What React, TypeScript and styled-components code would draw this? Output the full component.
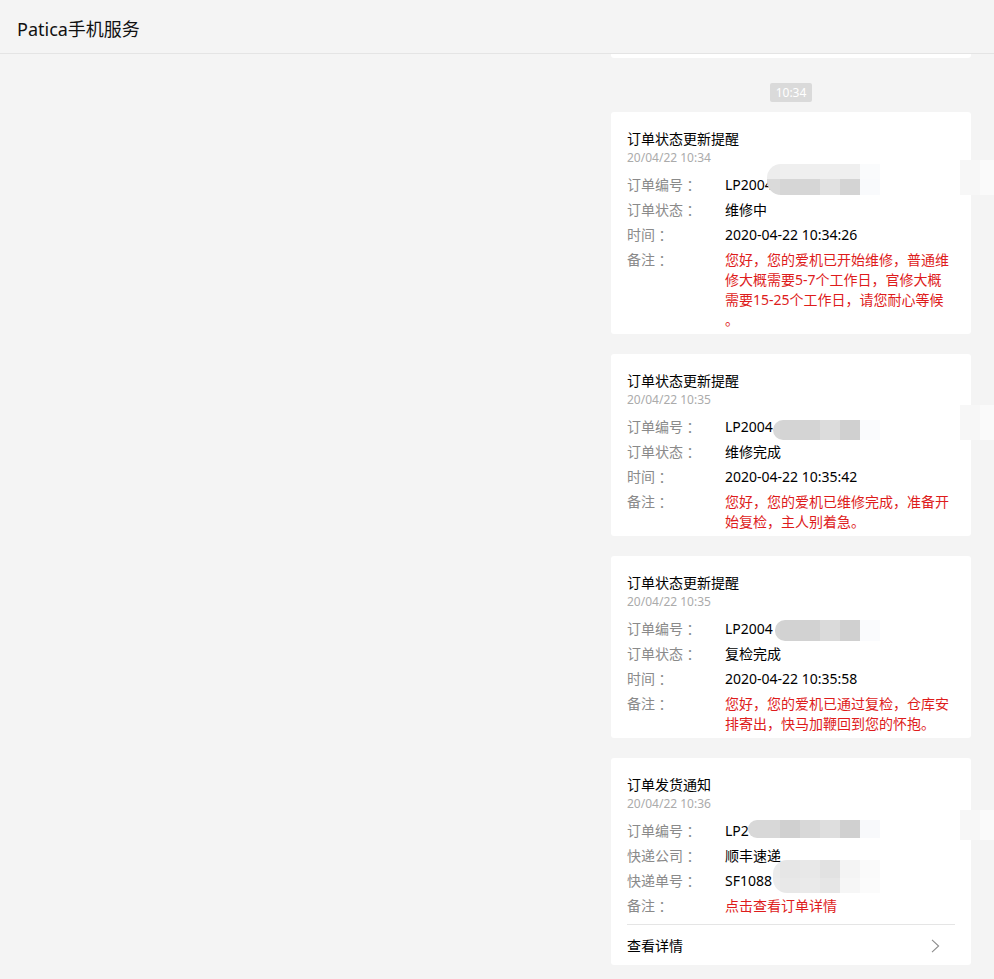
import React from "react";
import styled, { createGlobalStyle } from "styled-components";

const GlobalStyle = createGlobalStyle`
  html, body {
    margin: 0;
    padding: 0;
    background: #f4f4f4;
  }
  body {
    font-family: "Noto Sans", "Noto Sans CJK SC", sans-serif;
    color: #000;
  }
  * { box-sizing: border-box; }
`;

const Page = styled.div`
  min-height: 100vh;
  display: flex;
  flex-direction: column;
  overflow: hidden;
`;

const Header = styled.header`
  height: 54px;
  display: flex;
  align-items: center;
  padding: 3px 0 0 17px;
  border-bottom: 1px solid #e4e4e4;
  font-size: 18px;
  color: #111;
  flex-shrink: 0;
`;

const Main = styled.main`
  display: flex;
  justify-content: flex-end;
  padding-right: 23px;
`;

const Feed = styled.div`
  width: 360px;
  display: flex;
  flex-direction: column;
  padding-bottom: 20px;
`;

const CardTail = styled.div`
  height: 4px;
  background: #fff;
  border-radius: 0 0 3px 3px;
`;

const TimePill = styled.div`
  align-self: center;
  margin: 25px 0 10px;
  height: 19px;
  line-height: 19px;
  padding: 0 6px;
  border-radius: 2px;
  background: #dadada;
  color: #fff;
  font-size: 12px;
`;

const CardList = styled.div`
  display: flex;
  flex-direction: column;
  gap: 20px;
`;

const Card = styled.section`
  background: #fff;
  border-radius: 3px;
  padding: 17px 16px 2px;
`;

const CardTitle = styled.div`
  font-size: 14px;
  line-height: 20px;
  color: #000;
`;

const CardDate = styled.div`
  font-size: 12px;
  line-height: 18px;
  color: #ababab;
  margin-bottom: 5px;
`;

const Row = styled.div`
  position: relative;
  display: grid;
  grid-template-columns: 98px 1fr;
  padding: 2.5px 0;
  font-size: 14px;
  line-height: 20px;
`;

const Label = styled.span`
  display: flex;
  height: 20px;
  color: #8a8a8a;
`;

const Colon = styled.span`
  display: block;
  height: 20px;
  line-height: 20px;
  font-family: "Noto Sans CJK TC", "Noto Sans CJK SC", sans-serif;
`;

const Value = styled.span<{ $tone: "plain" | "red" }>`
  color: ${(p) => (p.$tone === "red" ? "#de1c1c" : "#000")};
  white-space: pre;
`;

const Redaction = styled.div<{ $left: number; $top: number; $radius: number }>`
  position: absolute;
  left: ${(p) => p.$left}px;
  top: ${(p) => p.$top}px;
  display: flex;
  flex-direction: column;
  border-radius: ${(p) => p.$radius}px 0 0 ${(p) => p.$radius}px;
  overflow: hidden;
  pointer-events: none;
`;

const BlurRow = styled.div<{ $h: number }>`
  display: flex;
  height: ${(p) => p.$h}px;
`;

const BlurCell = styled.div<{ $w: number; $c: string }>`
  width: ${(p) => p.$w}px;
  background: ${(p) => p.$c};
`;

const Footer = styled.div`
  margin-top: 6px;
  border-top: 1px solid #e5e5e5;
  padding: 11px 0 7px;
  display: flex;
  align-items: center;
  justify-content: space-between;
  font-size: 14px;
  line-height: 20px;
  color: #000;
`;

const Chevron = styled.svg`
  width: 9px;
  height: 14px;
  margin-right: 15px;
  display: block;
`;

type Blur = {
  left: number;
  top: number;
  radius: number;
  rows: { h: number; cells: { w: number; c: string }[] }[];
};

type Field = {
  label: string;
  value: string;
  tone?: "plain" | "red";
  blurs?: Blur[];
};

type Msg = {
  title: string;
  date: string;
  fields: Field[];
  footer?: string;
};

const faint = (top: number, h: number): Blur => ({
  left: 333,
  top,
  radius: 0,
  rows: [{ h, cells: [{ w: 20, c: "#f7f7f7" }, { w: 14, c: "#fafafa" }] }],
});

const messages: Msg[] = [
  {
    title: "订单状态更新提醒",
    date: "20/04/22 10:34",
    fields: [
      {
        label: "订单编号",
        value: "LP2004",
        blurs: [
          {
            left: 140,
            top: -8,
            radius: 14,
            rows: [
              {
                h: 15,
                cells: [
                  { w: 13, c: "#ededed" },
                  { w: 80, c: "#efefef" },
                  { w: 20, c: "#fafbfc" },
                ],
              },
              {
                h: 16,
                cells: [
                  { w: 13, c: "#dadada" },
                  { w: 40, c: "#d6d6d6" },
                  { w: 20, c: "#e1e1e1" },
                  { w: 20, c: "#d4d4d4" },
                  { w: 20, c: "#f9fafc" },
                ],
              },
            ],
          },
          faint(-12, 35),
        ],
      },
      { label: "订单状态", value: "维修中" },
      { label: "时间", value: "2020-04-22 10:34:26" },
      {
        label: "备注",
        value:
          "您好，您的爱机已开始维修，普通维\n修大概需要5-7个工作日，官修大概\n需要15-25个工作日，请您耐心等候\n。",
        tone: "red",
      },
    ],
  },
  {
    title: "订单状态更新提醒",
    date: "20/04/22 10:35",
    fields: [
      {
        label: "订单编号",
        value: "LP2004",
        blurs: [
          {
            left: 146,
            top: 6,
            radius: 10,
            rows: [
              {
                h: 20,
                cells: [
                  { w: 7, c: "#d8d8d8" },
                  { w: 40, c: "#d4d4d4" },
                  { w: 20, c: "#dcdcdc" },
                  { w: 20, c: "#d0d0d0" },
                  { w: 20, c: "#fafbfd" },
                ],
              },
            ],
          },
          faint(-9, 35),
        ],
      },
      { label: "订单状态", value: "维修完成" },
      { label: "时间", value: "2020-04-22 10:35:42" },
      {
        label: "备注",
        value: "您好，您的爱机已维修完成，准备开\n始复检，主人别着急。",
        tone: "red",
      },
    ],
  },
  {
    title: "订单状态更新提醒",
    date: "20/04/22 10:35",
    fields: [
      {
        label: "订单编号",
        value: "LP2004",
        blurs: [
          {
            left: 148,
            top: 4,
            radius: 10,
            rows: [
              {
                h: 21,
                cells: [
                  { w: 5, c: "#d6d6d6" },
                  { w: 40, c: "#d2d2d2" },
                  { w: 20, c: "#dadada" },
                  { w: 20, c: "#d0d0d0" },
                  { w: 20, c: "#fafbfd" },
                ],
              },
            ],
          },
        ],
      },
      { label: "订单状态", value: "复检完成" },
      { label: "时间", value: "2020-04-22 10:35:58" },
      {
        label: "备注",
        value: "您好，您的爱机已通过复检，仓库安\n排寄出，快马加鞭回到您的怀抱。",
        tone: "red",
      },
    ],
  },
  {
    title: "订单发货通知",
    date: "20/04/22 10:36",
    fields: [
      {
        label: "订单编号",
        value: "LP2",
        blurs: [
          {
            left: 121,
            top: 2,
            radius: 10,
            rows: [
              {
                h: 18,
                cells: [
                  { w: 32, c: "#d8d8d8" },
                  { w: 20, c: "#d0d0d0" },
                  { w: 20, c: "#d8d8d8" },
                  { w: 20, c: "#dedede" },
                  { w: 20, c: "#d0d0d0" },
                  { w: 20, c: "#f8f9fb" },
                ],
              },
            ],
          },
          faint(-8, 30),
        ],
      },
      { label: "快递公司", value: "顺丰速递" },
      {
        label: "快递单号",
        value: "SF1088",
        blurs: [
          {
            left: 146,
            top: -8,
            radius: 14,
            rows: [
              {
                h: 18,
                cells: [
                  { w: 7, c: "#ebebeb" },
                  { w: 20, c: "#e6e6e6" },
                  { w: 20, c: "#e8e8e8" },
                  { w: 20, c: "#e2e2e2" },
                  { w: 20, c: "#f4f4f4" },
                  { w: 20, c: "#fafafa" },
                ],
              },
              {
                h: 15,
                cells: [
                  { w: 7, c: "#ececec" },
                  { w: 20, c: "#e8e8e8" },
                  { w: 20, c: "#eaeaea" },
                  { w: 20, c: "#e6e6e6" },
                  { w: 20, c: "#f6f6f6" },
                  { w: 20, c: "#fbfbfb" },
                ],
              },
            ],
          },
        ],
      },
      { label: "备注", value: "点击查看订单详情", tone: "red" },
    ],
    footer: "查看详情",
  },
];

function MessageCard({ msg }: { msg: Msg }) {
  return (
    <Card>
      <CardTitle>{msg.title}</CardTitle>
      <CardDate>{msg.date}</CardDate>
      {msg.fields.map((f, i) => (
        <Row key={i}>
          <Label>
            <span>{f.label}</span>
            <Colon>：</Colon>
          </Label>
          <Value $tone={f.tone ?? "plain"}>{f.value}</Value>
          {f.blurs?.map((b, j) => (
            <Redaction key={j} $left={b.left} $top={b.top} $radius={b.radius}>
              {b.rows.map((r, k) => (
                <BlurRow key={k} $h={r.h}>
                  {r.cells.map((c, m) => (
                    <BlurCell key={m} $w={c.w} $c={c.c} />
                  ))}
                </BlurRow>
              ))}
            </Redaction>
          ))}
        </Row>
      ))}
      {msg.footer && (
        <Footer>
          <span>{msg.footer}</span>
          <Chevron viewBox="0 0 9 14" fill="none">
            <path d="M1 0.8 L7.6 7 L1 13.2" stroke="#8c8c8c" strokeWidth="1.1" />
          </Chevron>
        </Footer>
      )}
    </Card>
  );
}

export default function App() {
  return (
    <>
      <GlobalStyle />
      <Page>
        <Header>Patica手机服务</Header>
        <Main>
          <Feed>
            <CardTail />
            <TimePill>10:34</TimePill>
            <CardList>
              {messages.map((m, i) => (
                <MessageCard key={i} msg={m} />
              ))}
            </CardList>
          </Feed>
        </Main>
      </Page>
    </>
  );
}
